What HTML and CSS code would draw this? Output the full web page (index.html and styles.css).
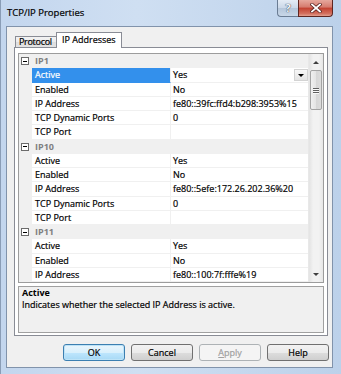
FILE: index.html
```html
<!DOCTYPE html>
<html>
<head>
<meta charset="utf-8">
<link rel="stylesheet" href="styles.css">
</head>
<body>
<div class="window">
  <div class="titlebar">
    <span class="title">TCP/IP Properties</span>
    <div class="caption">
      <div class="cap-help">?</div>
      <div class="cap-close">
        <svg width="12" height="10" viewBox="0 0 12 10">
          <path d="M2 1.5 L10 8.5 M10 1.5 L2 8.5" stroke="#5a2320" stroke-width="3.4" stroke-linecap="square"/>
          <path d="M2 1.5 L10 8.5 M10 1.5 L2 8.5" stroke="#ffffff" stroke-width="1.8" stroke-linecap="square"/>
        </svg>
      </div>
    </div>
  </div>
  <div class="client">
    <div class="tabs">
      <div class="tab">Protocol</div>
      <div class="tab tab-active">IP Addresses</div>
    </div>
    <div class="panel">
      <div class="grid">
        <div class="rows">
          <div class="row cat"><span class="gutter"><span class="box"></span></span><span class="catname">IP1</span></div>
          <div class="row"><span class="gutter"></span><span class="name sel">Active</span><span class="value">Yes<span class="drop"><span class="tri"></span></span></span></div>
          <div class="row"><span class="gutter"></span><span class="name">Enabled</span><span class="value">No</span></div>
          <div class="row"><span class="gutter"></span><span class="name">IP Address</span><span class="value">fe80::39fc:ffd4:b298:3953%15</span></div>
          <div class="row"><span class="gutter"></span><span class="name">TCP Dynamic Ports</span><span class="value">0</span></div>
          <div class="row"><span class="gutter"></span><span class="name">TCP Port</span><span class="value"></span></div>
          <div class="row cat"><span class="gutter"><span class="box"></span></span><span class="catname">IP10</span></div>
          <div class="row"><span class="gutter"></span><span class="name">Active</span><span class="value">Yes</span></div>
          <div class="row"><span class="gutter"></span><span class="name">Enabled</span><span class="value">No</span></div>
          <div class="row"><span class="gutter"></span><span class="name">IP Address</span><span class="value">fe80::5efe:172.26.202.36%20</span></div>
          <div class="row"><span class="gutter"></span><span class="name">TCP Dynamic Ports</span><span class="value">0</span></div>
          <div class="row"><span class="gutter"></span><span class="name">TCP Port</span><span class="value"></span></div>
          <div class="row cat"><span class="gutter"><span class="box"></span></span><span class="catname">IP11</span></div>
          <div class="row"><span class="gutter"></span><span class="name">Active</span><span class="value">Yes</span></div>
          <div class="row"><span class="gutter"></span><span class="name">Enabled</span><span class="value">No</span></div>
          <div class="row"><span class="gutter"></span><span class="name">IP Address</span><span class="value">fe80::100:7f:fffe%19</span></div>
        </div>
        <div class="scrollbar">
          <div class="sb-btn"><span class="arr-up"></span></div>
          <div class="sb-thumb"><span class="grip"></span><span class="grip"></span><span class="grip"></span></div>
          <div class="sb-track"></div>
          <div class="sb-btn"><span class="arr-down"></span></div>
        </div>
      </div>
      <div class="desc">
        <div class="desc-title">Active</div>
        <div class="desc-text">Indicates whether the selected IP Address is active.</div>
      </div>
    </div>
    <div class="buttons">
      <div class="btn btn-default">OK</div>
      <div class="btn">Cancel</div>
      <div class="btn btn-disabled"><u>A</u>pply</div>
      <div class="btn">Help</div>
    </div>
  </div>
</div>
</body>
</html>
```

FILE: styles.css
```css
* { box-sizing: border-box; }
html, body { margin: 0; padding: 0; }
body {
  width: 341px;
  height: 374px;
  overflow: hidden;
  font-family: "Open Sans", "Liberation Sans", sans-serif;
  font-size: 9px;
  color: #000;
  -webkit-text-stroke: 0.2px currentColor;
}
.window {
  width: 341px;
  height: 374px;
  display: flex;
  flex-direction: column;
  padding: 0 8px 6px 5px;
  background: linear-gradient(90deg, #c3d6ee 0%, #cfdff2 40%, #bcd1ea 100%);
  border-left: 1px solid #8a9db6;
}
.titlebar {
  height: 26px;
  display: flex;
  align-items: flex-start;
  flex: none;
}
.title {
  flex: 1;
  font-size: 9.5px;
  padding: 6px 0 0 1px;
  line-height: 13px;
  color: #000;
}
.caption {
  display: flex;
  height: 17px;
}
.cap-help {
  width: 21px;
  height: 17px;
  border: 1px solid #6a7c93;
  border-top: none;
  border-right: none;
  border-bottom-left-radius: 4px;
  background: linear-gradient(#e4ecf5, #cbd8e8 50%, #b5c6da 51%, #c8d7e8);
  color: #f4f6f9;
  font-weight: bold;
  font-size: 11px;
  line-height: 15px;
  text-align: center;
  -webkit-text-stroke: 0;
  text-shadow: 0 0 1px #38475a, 0 0 1px #38475a;
}
.cap-close {
  width: 35px;
  height: 17px;
  border: 1px solid #5e2621;
  border-top: none;
  border-bottom-right-radius: 4px;
  background: linear-gradient(#e6a89d, #d57a6d 45%, #c2402f 50%, #d3705f 85%, #e2a090);
  display: flex;
  align-items: center;
  justify-content: center;
}
.client {
  flex: 1;
  background: #f0f0f0;
  border: 1px solid #8193ab;
  display: flex;
  flex-direction: column;
}
.tabs {
  height: 15px;
  margin: 5px 0 0 8px;
  display: flex;
  align-items: flex-end;
  flex: none;
}
.tab {
  height: 11px;
  width: 42px;
  border: 1px solid #898c95;
  border-bottom: none;
  background: linear-gradient(#f3f3f3, #ebebeb 50%, #dddddd 51%, #e3e3e3);
  padding-left: 3px;
  line-height: 10px;
  font-size: 9px;
  letter-spacing: -0.3px;
  white-space: nowrap;
  overflow: hidden;
}
.tab-active {
  position: relative;
  z-index: 1;
  height: 16px;
  width: 66px;
  margin-bottom: -1px;
  margin-left: -1px;
  background: #ffffff;
  padding-left: 5px;
  line-height: 13px;
  letter-spacing: 0;
}
.panel {
  height: 289px;
  margin: 0 4px 0 7px;
  border: 1px solid #898c95;
  background: #ffffff;
  padding: 5px 3px 2px 3px;
  display: flex;
  flex-direction: column;
  gap: 3px;
  flex: none;
}
.grid {
  height: 230px;
  border: 1px solid #9c9c9c;
  display: flex;
  flex: none;
  background: #fff;
}
.rows {
  flex: 1;
  display: flex;
  flex-direction: column;
  overflow: hidden;
}
.row {
  height: 14.25px;
  display: flex;
  flex: none;
  line-height: 13px;
}
.gutter {
  width: 13px;
  flex: none;
  background: #f0f0f0;
  display: flex;
  align-items: center;
  padding-left: 2px;
}
.name {
  width: 139px;
  flex: none;
  padding-left: 3px;
  border-bottom: 1px solid #f0f0f0;
  border-right: 1px solid #f0f0f0;
  white-space: nowrap;
  overflow: hidden;
}
.name.sel {
  background: #3390ec;
  color: #fff;
  border-bottom-color: #3390ec;
}
.value {
  flex: 1;
  padding-left: 2px;
  border-bottom: 1px solid #f0f0f0;
  white-space: nowrap;
  overflow: hidden;
  display: flex;
}
.drop {
  margin-left: auto;
  width: 14px;
  height: 12px;
  margin-top: 1px;
  background: linear-gradient(#f7f7f7, #e4e4e4);
  border: 1px solid #d3d3d3;
  display: flex;
  align-items: center;
  justify-content: center;
}
.tri {
  width: 0;
  height: 0;
  border-left: 3px solid transparent;
  border-right: 3px solid transparent;
  border-top: 3px solid #000;
}
.row.cat {
  background: #f0f0f0;
}
.box {
  width: 8px;
  height: 8px;
  border: 1px solid #6b6b6b;
  background: #fff;
  display: flex;
  align-items: center;
  justify-content: center;
}
.box::after {
  content: "";
  width: 4px;
  height: 1px;
  background: #000;
}
.catname {
  padding-left: 3px;
  color: #808080;
  font-weight: bold;
  -webkit-text-stroke: 0;
}
.scrollbar {
  width: 15px;
  flex: none;
  display: flex;
  flex-direction: column;
  background: linear-gradient(90deg, #e3e3e3, #f2f2f2 30%, #f2f2f2 70%, #e6e6e6);
  border-left: 1px solid #e8e8e8;
}
.sb-btn {
  height: 16px;
  display: flex;
  align-items: center;
  justify-content: center;
  flex: none;
}
.arr-up {
  width: 0; height: 0;
  border-left: 3px solid transparent;
  border-right: 3px solid transparent;
  border-bottom: 3px solid #404040;
}
.arr-down {
  width: 0; height: 0;
  border-left: 3px solid transparent;
  border-right: 3px solid transparent;
  border-top: 3px solid #404040;
}
.sb-thumb {
  height: 40px;
  margin: 0 1px;
  border: 1px solid #a3a3a3;
  border-radius: 2px;
  background: linear-gradient(90deg, #f0f0f0, #e4e4e4 50%, #d6d6d6 51%, #dcdcdc);
  display: flex;
  flex-direction: column;
  align-items: center;
  justify-content: center;
  gap: 1px;
  flex: none;
}
.grip {
  width: 6px;
  height: 1px;
  background: #606060;
  box-shadow: 0 1px 0 #fafafa;
}
.sb-track { flex: 1; }
.desc {
  height: 47px;
  flex: none;
  border: 1px solid #a0a0a0;
  background: #f0f0f0;
  padding: 0 3px;
  line-height: 12px;
}
.desc-title { font-weight: bold; -webkit-text-stroke: 0; }
.buttons {
  height: 17px;
  margin: 8px 3px 0 0;
  display: flex;
  justify-content: flex-end;
  gap: 6px;
  flex: none;
}
.btn {
  width: 62px;
  height: 17px;
  border: 1px solid #707070;
  border-radius: 3px;
  background: linear-gradient(#f2f2f2, #ebebeb 50%, #dddddd 51%, #cfcfcf);
  text-align: center;
  line-height: 15px;
  font-size: 9px;
}
.btn-default {
  border-color: #3c7fb1;
  background: linear-gradient(#eaf6fd, #d9f0fc 50%, #bee6fd 51%, #a7d9f5);
  box-shadow: inset 0 0 0 1px #bde3f7;
}
.btn-disabled {
  color: #a0a0a0;
  border-color: #adb2b5;
  background: #f4f4f4;
}
```
